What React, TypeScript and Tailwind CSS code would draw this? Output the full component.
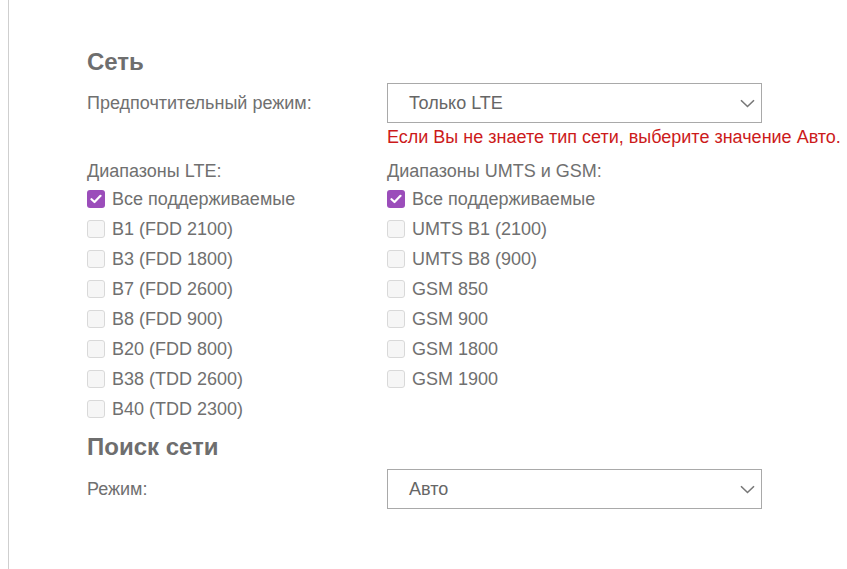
import React from 'react';

const lteBands = [
  'B1 (FDD 2100)',
  'B3 (FDD 1800)',
  'B7 (FDD 2600)',
  'B8 (FDD 900)',
  'B20 (FDD 800)',
  'B38 (TDD 2600)',
  'B40 (TDD 2300)',
];

const gsmBands = [
  'UMTS B1 (2100)',
  'UMTS B8 (900)',
  'GSM 850',
  'GSM 900',
  'GSM 1800',
  'GSM 1900',
];

function Checkbox({ checked, label }: { checked?: boolean; label: string }) {
  return (
    <div className="flex h-[30px] items-center gap-[7px]">
      {checked ? (
        <span className="flex h-[18px] w-[18px] items-center justify-center rounded-[3px] bg-[#9b4dba]">
          <svg width="12" height="10" viewBox="0 0 12 10" fill="none">
            <path d="M1.5 5.2 4.5 8 10.5 1.8" stroke="white" strokeWidth="2.2" strokeLinecap="round" strokeLinejoin="round" />
          </svg>
        </span>
      ) : (
        <span className="h-[18px] w-[18px] rounded-[3px] border border-[#d9d9d9] bg-[#f6f6f6]" />
      )}
      <span>{label}</span>
    </div>
  );
}

function Select({ value }: { value: string }) {
  return (
    <div className="flex h-[40px] w-[375px] items-center justify-between border border-[#a9a9a9] pl-[21px] pr-[6px] text-[#666]">
      <span>{value}</span>
      <svg width="15" height="9" viewBox="0 0 15 9" fill="none">
        <path d="M1 1.2 7.5 7.5 14 1.2" stroke="#777" strokeWidth="1.6" />
      </svg>
    </div>
  );
}

export default function App() {
  return (
    <div
      className="flex h-[569px] w-[847px] bg-white text-[18px] text-[#707070]"
      style={{ fontFamily: '"Liberation Sans", Arial, sans-serif' }}
    >
      <div className="ml-[8px] w-[1px] bg-[#cfcfcf]" />
      <div className="flex-1 pl-[78px] pt-[48px]">
        <h2 className="text-[24px] font-bold leading-[28px] text-[#6e6e6e]">Сеть</h2>

        <div className="mt-[7px] grid grid-cols-[300px_1fr]">
          <div className="flex h-[40px] items-center">Предпочтительный режим:</div>
          <Select value="Только LTE" />
          <div />
          <div className="mt-[4px] whitespace-nowrap leading-[20px] text-[#cc1a1a]">
            Если Вы не знаете тип сети, выберите значение Авто.
          </div>
        </div>

        <div className="mt-[11px] grid grid-cols-[300px_1fr]">
          <div>
            <div className="leading-[26px]">Диапазоны LTE:</div>
            <Checkbox checked label="Все поддерживаемые" />
            {lteBands.map((b) => (
              <Checkbox key={b} label={b} />
            ))}
          </div>
          <div>
            <div className="leading-[26px]">Диапазоны UMTS и GSM:</div>
            <Checkbox checked label="Все поддерживаемые" />
            {gsmBands.map((b) => (
              <Checkbox key={b} label={b} />
            ))}
          </div>
        </div>

        <h2 className="mt-[9px] text-[24px] font-bold leading-[28px] text-[#6e6e6e]">Поиск сети</h2>

        <div className="mt-[8px] grid grid-cols-[300px_1fr]">
          <div className="flex h-[40px] items-center">Режим:</div>
          <Select value="Авто" />
        </div>
      </div>
    </div>
  );
}
